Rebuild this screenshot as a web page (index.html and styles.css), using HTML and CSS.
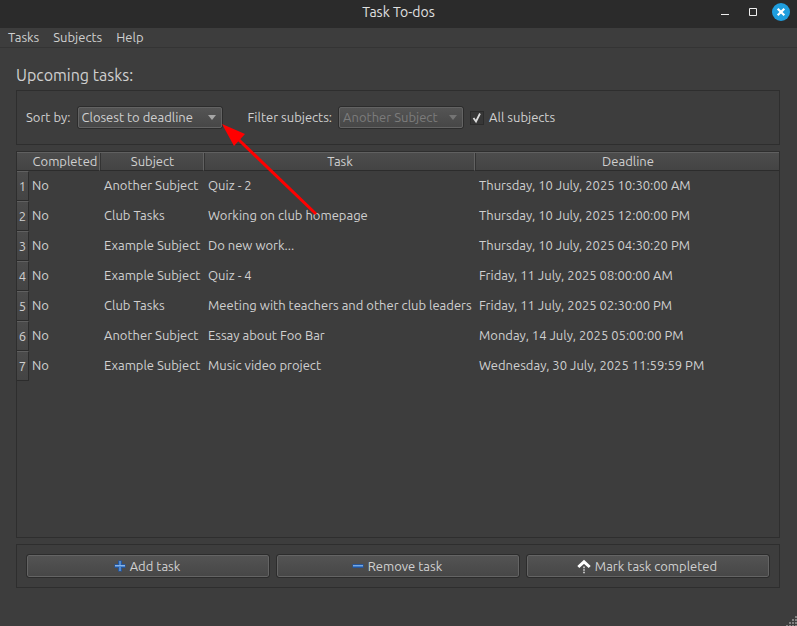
FILE: index.html
```html
<!DOCTYPE html>
<html lang="en">
<head>
<meta charset="utf-8">
<title>Task To-dos</title>
<link rel="stylesheet" href="styles.css">
</head>
<body>
<div class="window">
  <header class="titlebar">
    <span class="title">Task To-dos</span>
    <div class="window-buttons">
      <button type="button" class="window-button" aria-label="Minimize">
        <svg width="18" height="18" viewBox="0 0 18 18"><path d="M5 11h8v1H5z" fill="#eee"/></svg>
      </button>
      <button type="button" class="window-button" aria-label="Maximize">
        <svg width="18" height="18" viewBox="0 0 18 18"><path d="M5.500 5.500h7v7h-7z" fill="none" stroke="#eee"/></svg>
      </button>
      <button type="button" class="window-button" aria-label="Close">
        <svg width="18" height="18" viewBox="0 0 18 18"><circle cx="9" cy="9" r="9" fill="#1f9ede"/><path d="M5.700 5.700l6.600 6.600M12.300 5.700l-6.600 6.600" stroke="#fff" stroke-width="2.200"/></svg>
      </button>
    </div>
  </header>
  <nav class="menubar">
    <button type="button" class="menu">Tasks</button>
    <button type="button" class="menu">Subjects</button>
    <button type="button" class="menu">Help</button>
  </nav>
  <main class="content">
    <h1 class="heading">Upcoming tasks:</h1>
    <section class="group filters">
      <label class="filter-label" for="sort">Sort by:</label>
      <div class="combo sort-combo">
        <select id="sort"><option>Closest to deadline</option></select>
        <svg class="combo-arrow" width="8" height="5" viewBox="0 0 8 5"><path d="M0 0h8L4 5z" fill="#a6a6a6"/></svg>
        <svg class="pointer" width="98" height="94" viewBox="0 0 98 94"><path d="M17 16l77 74" stroke="#f00" stroke-width="3"/><path d="M0 0l23 10-11 12z" fill="#f00"/></svg>
      </div>
      <label class="filter-label" for="subject">Filter subjects:</label>
      <div class="combo subject-combo disabled">
        <select id="subject" disabled><option>Another Subject</option></select>
        <svg class="combo-arrow" width="8" height="5" viewBox="0 0 8 5"><path d="M0 0h8L4 5z" fill="#747474"/></svg>
      </div>
      <div class="check">
        <input type="checkbox" id="all" checked>
        <svg class="check-mark" width="14" height="14" viewBox="0 0 14 14"><path d="M3.500 7l2.500 3.500L10 2.500" fill="none" stroke="#dcdcdc" stroke-width="1.800"/></svg>
      </div>
      <label class="filter-label" for="all">All subjects</label>
    </section>
    <section class="table-frame">
      <table class="tasks">
        <colgroup><col class="col-index"><col class="col-completed"><col class="col-subject"><col class="col-task"><col></colgroup>
        <thead>
          <tr><td class="corner"></td><th scope="col">Completed</th><th scope="col">Subject</th><th scope="col">Task</th><th scope="col">Deadline</th></tr>
        </thead>
        <tbody>
          <tr><th scope="row">1</th><td class="state">No</td><td>Another Subject</td><td>Quiz - 2</td><td>Thursday, 10 July, 2025 10:30:00 AM</td></tr>
          <tr><th scope="row">2</th><td class="state">No</td><td>Club Tasks</td><td>Working on club homepage</td><td>Thursday, 10 July, 2025 12:00:00 PM</td></tr>
          <tr><th scope="row">3</th><td class="state">No</td><td>Example Subject</td><td>Do new work...</td><td>Thursday, 10 July, 2025 04:30:20 PM</td></tr>
          <tr><th scope="row">4</th><td class="state">No</td><td>Example Subject</td><td>Quiz - 4</td><td>Friday, 11 July, 2025 08:00:00 AM</td></tr>
          <tr><th scope="row">5</th><td class="state">No</td><td>Club Tasks</td><td>Meeting with teachers and other club leaders</td><td>Friday, 11 July, 2025 02:30:00 PM</td></tr>
          <tr><th scope="row">6</th><td class="state">No</td><td>Another Subject</td><td>Essay about Foo Bar</td><td>Monday, 14 July, 2025 05:00:00 PM</td></tr>
          <tr><th scope="row">7</th><td class="state">No</td><td>Example Subject</td><td>Music video project</td><td>Wednesday, 30 July, 2025 11:59:59 PM</td></tr>
        </tbody>
      </table>
    </section>
    <section class="group actions">
      <button type="button" class="action">
        <svg width="12" height="12" viewBox="0 0 12 12"><path d="M4 .5h4V4h3.500v4H8v3.500H4V8H.5V4H4z" fill="#24559c"/><path d="M5 1h2v4h4v2H7v4H5V7H1V5h4z" fill="#5088cc"/><path d="M5 1h1v4H1v1h5V1zM6 5h5v1H6z" fill="#8ab4e6"/></svg>
        Add task
      </button>
      <button type="button" class="action">
        <svg width="12" height="12" viewBox="0 0 12 12"><path d="M.5 4h11v4H.5z" fill="#24559c"/><path d="M1 5h10v2H1z" fill="#3f7cc8"/><path d="M1 5h10v1H1z" fill="#78a8e0"/></svg>
        Remove task
      </button>
      <button type="button" class="action">
        <svg width="14" height="15" viewBox="0 0 14 15"><path d="M1.300 8L7 2.800 12.700 8" fill="none" stroke="#fff" stroke-width="3"/><path d="M6 7.500h2v1.800H6zM6 10.300h2v1.500H6zM6 12.800h2v1.500H6z" fill="#bbb"/></svg>
        Mark task completed
      </button>
    </section>
  </main>
  <footer class="statusbar">
    <svg width="11" height="11" viewBox="0 0 11 11"><path d="M9 1h2v2H9zM6 4h2v2H6zM9 4h2v2H9zM3 7h2v2H3zM6 7h2v2H6zM9 7h2v2H9zM0 10h2v1H0zM3 10h2v1H3zM6 10h2v1H6zM9 10h2v1H9z" fill="#808080"/></svg>
  </footer>
</div>
</body>
</html>
```
FILE: styles.css
```css
* { box-sizing: border-box; }

body {
  margin: 0;
  background: #3d3d3d;
  color: #d0d0d0;
  font: 13px/18px Ubuntu, "Noto Sans", sans-serif;
}

button, select, input {
  margin: 0;
  padding: 0;
  border: 0;
  background: none;
  color: inherit;
  font: inherit;
}

svg { display: block; flex: none; }

.window {
  display: flex;
  flex-direction: column;
  min-height: 100vh;
}

.titlebar {
  display: grid;
  grid-template-columns: 1fr auto 1fr;
  align-items: center;
  height: 28px;
  padding: 0 7px 4px 7px;
  background: #2b2b2b;
  color: #e0e0e0;
}

.title { grid-column: 2; font-size: 14px; }

.window-buttons {
  display: flex;
  justify-content: flex-end;
  gap: 10px;
}

.menubar {
  display: flex;
  gap: 14px;
  height: 20px;
  padding: 0 8px 2px;
  border-bottom: 1px solid #343434;
}

.content {
  flex: 1;
  display: flex;
  flex-direction: column;
  gap: 6px;
  padding: 18px 17px 0 16px;
}

.heading {
  margin: 0;
  font-size: 16px;
  font-weight: 400;
  line-height: 18px;
}

.group { border: 1px solid #2e2e2e; }

.filters {
  display: flex;
  align-items: center;
  height: 55px;
  padding: 0 9px;
}

.filter-label { padding-bottom: 2px; }

.combo {
  position: relative;
  height: 23px;
  border: 1px solid #2c2c2c;
  border-radius: 3px;
}

.combo select {
  appearance: none;
  display: block;
  width: 100%;
  height: 21px;
  padding: 0 4px 2px 3px;
  border: 1px solid #636363;
  border-radius: 2px;
  background: linear-gradient(#545454, #474747);
}

.combo select:disabled { color: #7c7c7c; opacity: 1; }

.sort-combo { width: 146px; margin: 0 25px 0 6px; }
.subject-combo { width: 126px; margin: 0 6px; }

.combo-arrow {
  position: absolute;
  top: 8px;
  right: 6px;
}

.pointer {
  position: absolute;
  left: 144px;
  top: 17px;
  pointer-events: none;
}

.check {
  position: relative;
  width: 14px;
  height: 14px;
  margin-right: 5px;
}

.check input {
  appearance: none;
  display: block;
  width: 14px;
  height: 14px;
  border: 1px solid #2c2c2c;
  background: #373737;
}

.check-mark {
  position: absolute;
  inset: 0;
  pointer-events: none;
}

.table-frame {
  flex: 1;
  border: 1px solid #2e2e2e;
}

.tasks {
  width: 100%;
  table-layout: fixed;
  border-collapse: separate;
  border-spacing: 0;
  white-space: nowrap;
}

.col-index { width: 12px; }
.col-completed { width: 71px; }
.col-subject { width: 104px; }
.col-task { width: 271px; }

.tasks th { padding: 0; font-weight: 400; }

.tasks thead th, .corner {
  height: 19px;
  padding: 0 0 0 2px;
  border-top: 1px solid #606060;
  border-bottom: 1px solid #2c2c2c;
  background: linear-gradient(#4c4c4c, #444444);
}

.tasks thead th { border-right: 1px solid #626262; line-height: 17px; }
.tasks thead th:last-child { border-right: 0; }
.tasks thead th + th { box-shadow: inset 1px 0 #333; }

.tasks tbody th {
  height: 30px;
  border-top: 1px solid #606060;
  border-right: 1px solid #2c2c2c;
  border-bottom: 1px solid #2c2c2c;
  background: linear-gradient(#4b4b4b, #444444);
}

.tasks tbody td { padding: 0 0 2px 4px; }
.tasks tbody .state { padding-left: 3px; }

.actions {
  display: grid;
  grid-template-columns: repeat(3, 1fr);
  gap: 8px;
  padding: 10px;
}

.action {
  display: flex;
  align-items: center;
  justify-content: center;
  gap: 4px;
  height: 22px;
  padding-right: 2px;
  border: 1px solid #646464;
  border-radius: 2px;
  background: linear-gradient(#535353, #474747);
  outline: 1px solid #2c2c2c;
}

.statusbar {
  display: flex;
  align-items: flex-end;
  justify-content: flex-end;
  height: 38px;
}
```
